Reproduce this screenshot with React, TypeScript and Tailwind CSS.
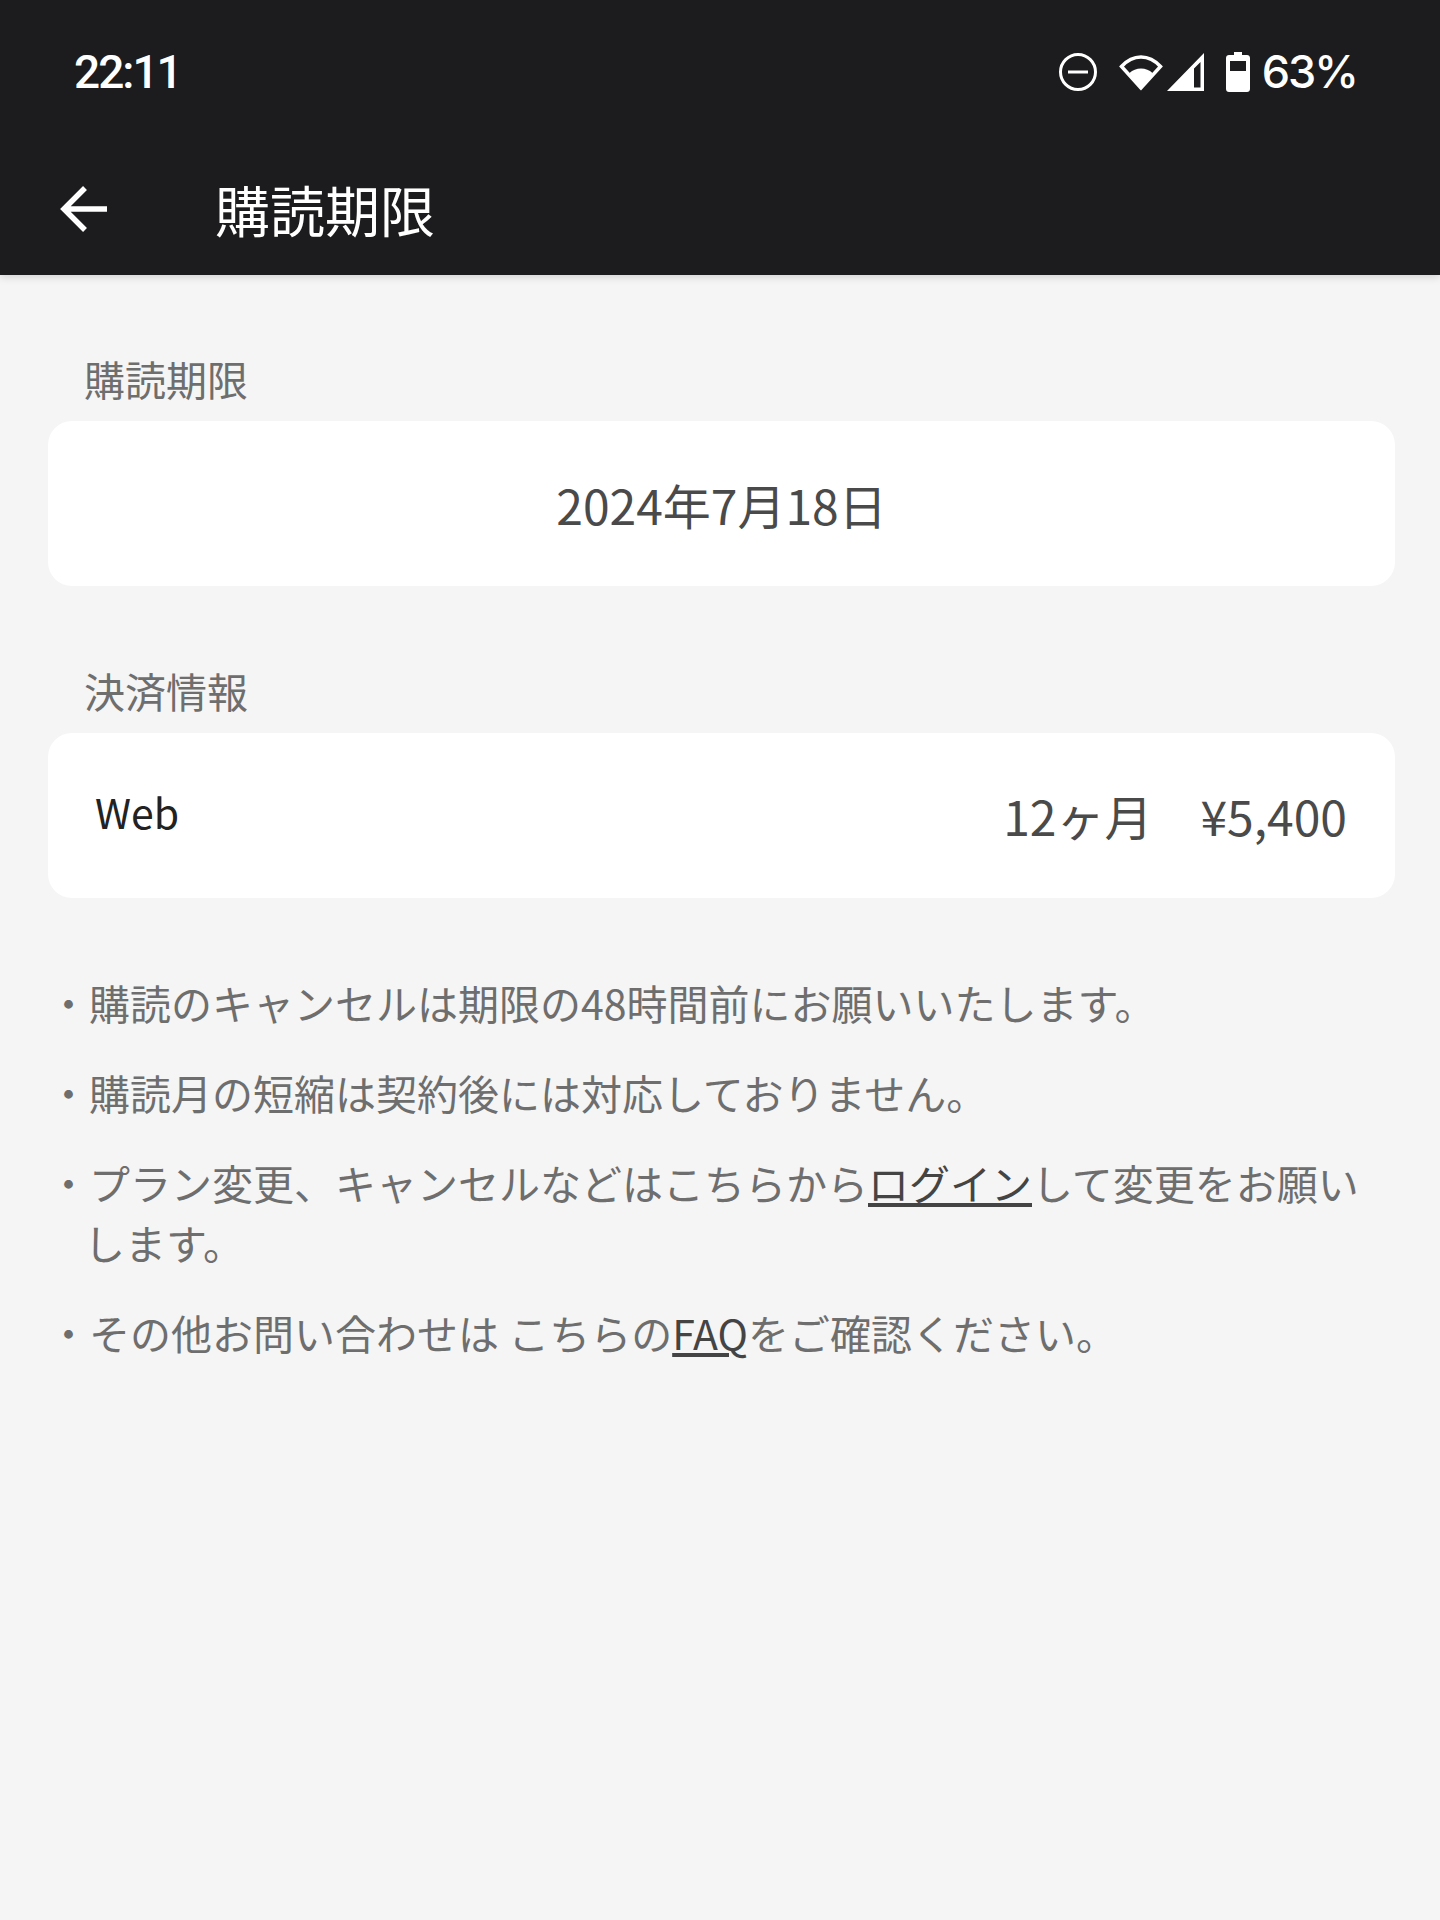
import React from 'react';

const cjk = "font-['Noto_Sans_CJK_JP','Noto_Sans',sans-serif]";

const StatusIcons = () => (
  <div className="flex items-center">
    <svg width="40" height="40" viewBox="0 0 40 40" fill="none" className="mr-[20px]">
      <circle cx="20" cy="20" r="17.5" stroke="white" strokeWidth="3" />
      <rect x="10" y="18.500" width="20" height="3" fill="white" />
    </svg>
    <svg width="46" height="38" viewBox="0 0 46 38" fill="none" className="mr-[3px]">
      <path d="M23 35 3.500 13.500C9 7.500 15.500 4 23 4s14 3.500 19.500 9.500Z" stroke="white" strokeWidth="3.500" strokeLinejoin="miter" />
      <path d="M23 36.500 11.500 20c3.200-3 7-4.500 11.500-4.500S31.300 17 34.500 20Z" fill="white" />
    </svg>
    <svg width="38" height="38" viewBox="0 0 38 38" className="mr-[21px]">
      <path fillRule="evenodd" d="M37 0v38H0ZM33.500 9 27 15.500V34.500h6.500Z" fill="white" />
    </svg>
    <svg width="24" height="40" viewBox="0 0 24 40" className="mr-[12px]">
      <path fillRule="evenodd" d="M8 0h8v3h5c1.700 0 3 1.300 3 3v31c0 1.700-1.300 3-3 3H3c-1.700 0-3-1.300-3-3V6c0-1.700 1.300-3 3-3h5ZM4 9v10h16V9Z" fill="white" />
    </svg>
    <span className="font-['Inter',sans-serif] text-[45px] leading-none font-medium tracking-[-2px] text-white">63%</span>
  </div>
);

const Section = ({ label, children }: { label: string; children: React.ReactNode }) => (
  <section>
    <h2 className="pl-[36px] text-[41px] leading-[60px] text-[#6e6e6e]">{label}</h2>
    <div className="mt-[13px] h-[165px] rounded-[24px] bg-white">{children}</div>
  </section>
);

const Note = ({ children }: { children: React.ReactNode }) => (
  <li className="pl-[36px] -indent-[36px]">・{children}</li>
);

export default function App() {
  return (
    <div className={`${cjk} min-h-[1920px] bg-[#f5f5f5]`}>
      <header className="h-[275px] bg-[#1c1c1e] shadow-[0_2px_8px_rgba(0,0,0,0.15)]">
        <div className="flex h-[142px] items-center justify-between pt-[1px] pr-[83px] pl-[74px]">
          <span className="font-['Roboto',sans-serif] text-[46px] leading-none font-medium tracking-[-2px] text-white">22:11</span>
          <StatusIcons />
        </div>
        <div className="flex h-[133px] items-center pl-[60px]">
          <svg width="48" height="48" viewBox="0 0 48 48" fill="none" stroke="white" strokeWidth="5.500">
            <path d="M47 24H4M25 3 4 24l21 21" />
          </svg>
          <h1 className="ml-[107px] text-[55px] leading-none text-white">購読期限</h1>
        </div>
      </header>

      <main className="pt-[73px] pr-[45px] pl-[48px]">
        <Section label="購読期限">
          <p className="pt-[51px] text-center text-[48px] leading-[64px] text-[#4a4a4a]">2024年7月18日</p>
        </Section>
        <div className="mt-[74px]">
          <Section label="決済情報">
            <div className="flex justify-between pt-[50px] pr-[48px] pl-[47px]">
              <span className="text-[41px] leading-[56px] text-[#222222]">Web</span>
              <span className="text-[48px] leading-[64px] text-[#4a4a4a]">12ヶ月　¥5,400</span>
            </div>
          </Section>
        </div>
        <ul className="mt-[74px] space-y-[30px] text-[41px] leading-[60px] text-[#6e6e6e]">
          <Note>購読のキャンセルは期限の48時間前にお願いいたします。</Note>
          <Note>購読月の短縮は契約後には対応しておりません。</Note>
          <Note>
            プラン変更、キャンセルなどはこちらから
            <a className="text-[#444444] underline">ログイン</a>
            して変更をお願いします。
          </Note>
          <Note>
            その他お問い合わせは こちらの<a className="text-[#444444] underline">FAQ</a>をご確認ください。
          </Note>
        </ul>
      </main>
    </div>
  );
}
